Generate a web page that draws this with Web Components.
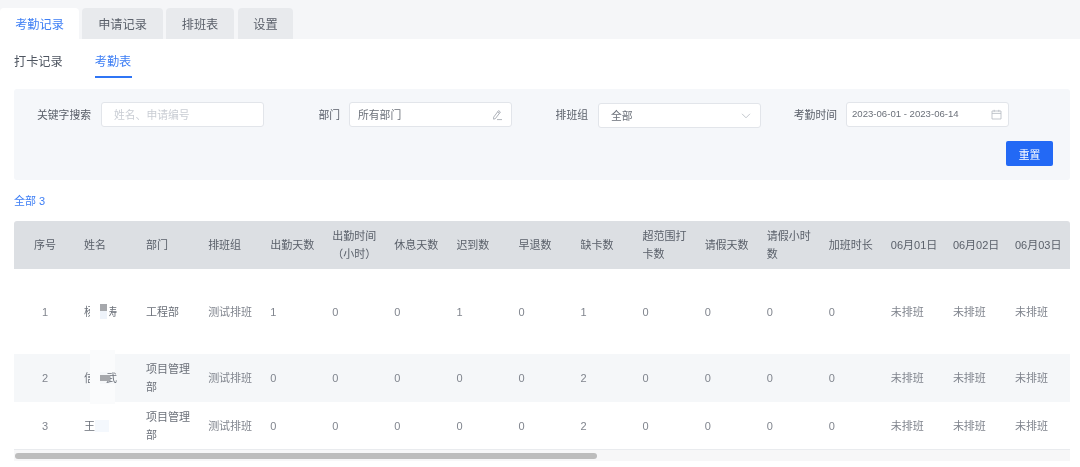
<!DOCTYPE html>
<html lang="zh">
<head>
<meta charset="utf-8">
<style>
html,body{margin:0;padding:0;height:467px;overflow:hidden;background:#fff;}
body{font-family:"Liberation Sans","Noto Sans CJK SC",sans-serif;color:#5a606a;}
</style>
</head>
<body>
<attend-page></attend-page>
<script>
class TopTabs extends HTMLElement{
    constructor(){
        super();
        this.attachShadow({mode:'open'}).innerHTML = `
        <style>
        :host{display:flex;height:31px;padding-top:8px;background:#f5f6f8;}
        div{display:flex;align-items:center;justify-content:center;margin-right:3px;background:#e8eaed;border-radius:4px 4px 0 0;font-size:12.2px;color:#5a606a;}
        .on{background:#fff;color:#3d7ef5;}
        </style>
        <div class="on" style="width:79px">考勤记录</div>
        <div style="width:81px">申请记录</div>
        <div style="width:68px">排班表</div>
        <div style="width:55px;margin-left:1px">设置</div>`;
    }
}
class SubTabs extends HTMLElement{
    constructor(){
        super();
        this.attachShadow({mode:'open'}).innerHTML = `
        <style>
        :host{display:flex;gap:32px;height:39px;padding:0 14px;box-sizing:border-box;font-size:12.2px;color:#4e5560;}
        div{height:39px;line-height:47px;box-sizing:border-box;}
        .on{color:#3d7ef5;border-bottom:2px solid #2f75f5;width:37px;white-space:nowrap;}
        </style>
        <div>打卡记录</div>
        <div class="on">考勤表</div>`;
    }
}
class FilterField extends HTMLElement{
    constructor(){
        super();
        this.attachShadow({mode:'open'}).innerHTML = `
        <style>
        :host{display:flex;align-items:center;height:25px;font-size:10.8px;position:relative;}
        label{display:block;text-align:right;color:#5a606a;white-space:nowrap;padding:0 var(--lp,10px) 2px 0;box-sizing:border-box;width:var(--lw);}
        .box{display:flex;align-items:center;justify-content:space-between;box-sizing:border-box;width:163px;height:25px;background:#fff;border:1px solid #e2e5ea;border-radius:3px;padding:0 var(--pr,8px) 0 var(--pl,8px);color:var(--c,#6b7079);font-size:var(--fs,10.8px);white-space:nowrap;}
        .box span{position:relative;top:-1px;}
        </style>
        <label part="label"><slot name="label"></slot></label>
        <div class="box"><span><slot name="value"></slot></span><slot name="icon"></slot></div>`;
    }
}
class FilterPanel extends HTMLElement{
    constructor(){
        super();
        this.attachShadow({mode:'open'}).innerHTML = `
        <style>
        :host{display:block;box-sizing:border-box;height:91px;margin:11px 10px 0 14px;background:#f5f7fa;border-radius:3px;}
        .row{display:flex;padding-top:13px;}
        svg{display:block;}
        filter-field span{white-space:nowrap;}
        .btn{display:flex;align-items:center;justify-content:center;width:47px;height:25px;margin:14px 17px 0 auto;background:#2369f5;color:#fff;font-size:10.8px;border-radius:2px;}
        </style>
        <div class="row">
          <filter-field style="--lw:87px;--pl:12px;--c:#c9cdd4">
            <span slot="label">关键字搜索</span><span slot="value">姓名、申请编号</span>
          </filter-field>
          <filter-field style="--lw:85px;--lp:9px">
            <span slot="label">部门</span><span slot="value">所有部门</span>
            <svg slot="icon" width="12" height="12" viewBox="0 0 12 12" fill="none" stroke="#9aa0a8" stroke-width=".8"><path d="M7.6 1.6 9.4 3 4.4 9.6 2.6 10.2 2.6 8.2ZM6.6 2.9 8.4 4.3M6 10.6H11"/></svg>
          </filter-field>
          <filter-field style="--lw:86px;--pl:12px;--pr:9px;position:relative;top:1px">
            <span slot="label" style="position:relative;top:-1px">排班组</span><span slot="value">全部</span>
            <svg slot="icon" width="10" height="6" viewBox="0 0 10 6" fill="none" stroke="#b4b9c0" stroke-width=".8"><path d="M1 .8 5 4.8 9 .8"/></svg>
          </filter-field>
          <filter-field style="--lw:85px;--lp:9px;--pl:5px;--pr:6px;--fs:9.6px">
            <span slot="label">考勤时间</span><span slot="value">2023-06-01 - 2023-06-14</span>
            <svg slot="icon" width="11" height="11" viewBox="0 0 11 11" fill="none" stroke="#b4b9c0" stroke-width=".8"><path d="M1 2H10V10H1ZM1 4.4H10M3.2 .8V2.8M7.8 .8V2.8"/></svg>
          </filter-field>
        </div>
        <div class="btn">重置</div>`;
    }
}
class AttendTable extends HTMLElement{
    constructor(){
        super();
        const heads = ['序号','姓名','部门','排班组','出勤天数','出勤时间<br>（小时）','休息天数','迟到数','早退数','缺卡数','超范围打卡数','请假天数','请假小时数','加班时长','06月01日','06月02日','06月03日'];
        const rows = [
            ['1','杨涛涛','工程部','测试排班','1','0','0','1','0','1','0','0','0','0'],
            ['2','信一武','项目管理部','测试排班','0','0','0','0','0','2','0','0','0','0'],
            ['3','王','项目管理部','测试排班','0','0','0','0','0','2','0','0','0','0']
        ];
        const tail = '<div class="c">未排班</div>'.repeat(3);
        const rowHtml = rows.map((r,i) => `<div class="r r${i+1}">` + r.map((t,j) => `<div class="c${j==0?' first':''}">${t}</div>`).join('') + tail + '</div>').join('');
        this.attachShadow({mode:'open'}).innerHTML = `
        <style>
        :host{display:block;position:relative;margin:0 10px 0 14px;font-size:11px;line-height:18px;}
        .r{display:grid;grid-template-columns:62px repeat(16,62.07px);width:1056px;overflow:hidden;align-items:center;color:#80858e;}
        .c{padding:0 8px;box-sizing:border-box;width:62px;}
        .first{text-align:center;padding:0;}
        .head{height:48px;background:#dcdfe3;border-radius:3px 3px 0 0;}
        .head .c{padding-right:4px;}
        .head .first{padding:0;}
        .r1{height:85px;}
        .r2{height:48px;background:#f5f7f9;}
        .r3{height:48px;border-bottom:1px solid #e9ebee;box-sizing:border-box;}
        .r .c:nth-child(2),.r .c:nth-child(3){color:#6b7079;}
        .r .c:nth-child(2){white-space:nowrap;}
        .head .c:nth-child(n){color:#5a606a;}
        .bar{height:11px;background:#f7f7f8;padding-top:3px;box-sizing:border-box;}
        .thumb{width:582px;height:6px;margin-left:1px;background:#bdbdbd;border-radius:3px;}
        .blot{position:absolute;}
        .dark{position:absolute;background:#a6a8ac;}
        </style>
        <div class="r head">${heads.map((t,j) => `<div class="c${j==0?' first':''}">${t}</div>`).join('')}</div>
        ${rowHtml}
        <div class="bar"><div class="thumb"></div></div>
        <div class="blot" style="left:76px;top:80px;width:19px;height:20px;background:#fff"></div>
        <div class="dark" style="left:86px;top:83px;width:7px;height:7px"></div>
        <div class="blot" style="left:86px;top:90px;width:7px;height:8px;background:#eef3fa"></div>
        <div class="blot" style="left:76px;top:129px;width:25px;height:22px;background:#fafbfc"></div>
        <div class="blot" style="left:76px;top:151px;width:10px;height:12px;background:#fafbfc"></div>
        <div class="dark" style="left:86px;top:154px;width:10px;height:6px"></div>
        <div class="blot" style="left:76px;top:163px;width:25px;height:20px;background:#fafbfc"></div>
        <div class="blot" style="left:81px;top:199px;width:14px;height:12px;background:#f4f8fd"></div>
        `;
    }
}
class AttendPage extends HTMLElement{
    constructor(){
        super();
        this.attachShadow({mode:'open'}).innerHTML = `
        <style>
        :host{display:block;width:1080px;height:467px;overflow:hidden;will-change:opacity;font-family:"Liberation Sans","Noto Sans CJK SC",sans-serif;}
        .total{height:41px;box-sizing:border-box;padding:14px 14px 0;font-size:11px;line-height:14px;color:#3d7ef5;}
        </style>
        <top-tabs></top-tabs>
        <sub-tabs></sub-tabs>
        <filter-panel></filter-panel>
        <div class="total">全部 3</div>
        <attend-table></attend-table>`;
    }
}
customElements.define('top-tabs',TopTabs);
customElements.define('sub-tabs',SubTabs);
customElements.define('filter-field',FilterField);
customElements.define('filter-panel',FilterPanel);
customElements.define('attend-table',AttendTable);
customElements.define('attend-page',AttendPage);
</script>
</body>
</html>
